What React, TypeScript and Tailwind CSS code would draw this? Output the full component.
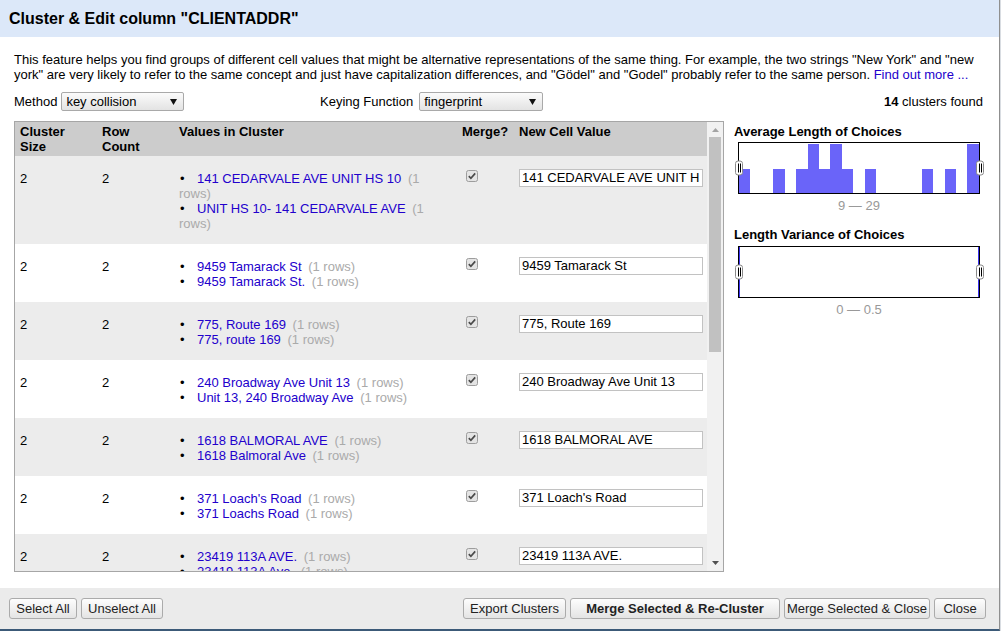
import React from "react";

type Cluster = {
  values: [string, number][];
  merged: string;
};

const clusters: Cluster[] = [
  { values: [["141 CEDARVALE AVE UNIT HS 10", 1], ["UNIT HS 10- 141 CEDARVALE AVE", 1]], merged: "141 CEDARVALE AVE UNIT HS 10" },
  { values: [["9459 Tamarack St", 1], ["9459 Tamarack St.", 1]], merged: "9459 Tamarack St" },
  { values: [["775, Route 169", 1], ["775, route 169", 1]], merged: "775, Route 169" },
  { values: [["240 Broadway Ave Unit 13", 1], ["Unit 13, 240 Broadway Ave", 1]], merged: "240 Broadway Ave Unit 13" },
  { values: [["1618 BALMORAL AVE", 1], ["1618 Balmoral Ave", 1]], merged: "1618 BALMORAL AVE" },
  { values: [["371 Loach's Road", 1], ["371 Loachs Road", 1]], merged: "371 Loach's Road" },
  { values: [["23419 113A AVE.", 1], ["23419 113A Ave.", 1]], merged: "23419 113A AVE." },
];

// average length histogram, 9..29
const bins = [1, 0, 0, 1, 0, 1, 2, 1, 2, 1, 0, 1, 0, 0, 0, 0, 1, 0, 1, 0, 2];

function Handle({ side }: { side: "left" | "right" }) {
  return (
    <div
      className={`absolute top-1/2 -translate-y-1/2 ${side === "left" ? "-left-[4px]" : "-right-[5px]"} h-[15px] w-[8px] rounded-[3px] border border-[#8a8a8a] bg-white flex items-center justify-center gap-[1px]`}
    >
      <div className="h-[9px] w-px bg-black" />
      <div className="h-[9px] w-px bg-black" />
    </div>
  );
}

function Checkbox() {
  return (
    <svg width="12" height="12" viewBox="0 0 12 12">
      <rect x="0.5" y="0.5" width="11" height="11" rx="2" fill="#e4e4e4" stroke="#9d9d9d" />
      <path d="M2.8 6.1 L4.9 8.3 L9.2 3.4" fill="none" stroke="#4a4a4a" strokeWidth="1.7" />
    </svg>
  );
}

function Select({ label, width }: { label: string; width: string }) {
  return (
    <div
      className={`${width} h-[19px] border border-[#a9a9a9] rounded-[2px] bg-linear-to-b from-[#fbfbfb] to-[#e3e3e3] flex items-center pl-[4px] pr-[6px]`}
    >
      <span className="flex-1">{label}</span>
      <svg width="7" height="6" viewBox="0 0 7 6">
        <polygon points="0,0 7,0 3.5,6" fill="#111" />
      </svg>
    </div>
  );
}

function Button({ children, width, bold }: { children: React.ReactNode; width: string; bold?: boolean }) {
  return (
    <button
      className={`${width} h-[21px] shrink-0 rounded-[3px] border border-[#ababab] bg-linear-to-b from-[#fdfdfd] to-[#e4e4e4] text-[13px] text-[#222] leading-[19px] whitespace-nowrap ${bold ? "font-bold" : ""}`}
    >
      {children}
    </button>
  );
}

function Row({ c, shaded }: { c: Cluster; shaded: boolean }) {
  return (
    <div className={`flex pt-[15px] pb-[13px] ${shaded ? "bg-[#ececec]" : "bg-white"}`}>
      <div className="w-[82px] shrink-0 pl-[5px]">{c.values.length}</div>
      <div className="w-[77px] shrink-0 pl-[5px]">{c.values.reduce((s, v) => s + v[1], 0)}</div>
      <div className="w-[283px] shrink-0 px-[5px]">
        {c.values.map(([v, n]) => (
          <div key={v}>
            <span className="inline-block w-[18px] pl-[1px]">•</span>
            <span className="text-[#2200cc]">{v}</span>{" "}
            <span className="ml-[3px] text-[#aaaaaa]">({n} rows)</span>
          </div>
        ))}
      </div>
      <div className="w-[57px] shrink-0 pl-[9px] -mt-[1px]">
        <Checkbox />
      </div>
      <div className="w-[193px] shrink-0 pl-[5px] -mt-[2px]">
        <div className="w-[184px] h-[18px] border border-[#c2c2c2] bg-white px-[2px] leading-[16px]">
          <div className="overflow-hidden whitespace-nowrap">{c.merged}</div>
        </div>
      </div>
    </div>
  );
}

export default function App() {
  return (
    <div className="w-[1001px] h-[631px] flex bg-[#e4e7eb] font-['Liberation_Sans',Arial,sans-serif] text-[13px] leading-[15px] text-black overflow-hidden">
      <div className="w-[1000px] h-full flex flex-col border-r border-r-[#8f8f8f] border-b-2 border-b-[#3c5a78]">
        <div className="h-[37px] shrink-0 bg-[#dce8f9] flex items-center pl-[9px]">
          <h1 className="text-[16px] font-bold">Cluster &amp; Edit column "CLIENTADDR"</h1>
        </div>

        <div className="flex-1 bg-white pl-[14px] pr-[15px]">
          <p className="mt-[15px]">
            This feature helps you find groups of different cell values that might be alternative representations of the
            same thing. For example, the two strings "New York" and "new york" are very likely to refer to the same concept
            and just have capitalization differences, and "Gödel" and "Godel" probably refer to the same person.{" "}
            <span className="text-[#2200cc]">Find out more ...</span>
          </p>

          <div className="mt-[10px] h-[19px] flex items-center">
            <div className="w-[306px] flex items-center gap-[4px]">
              <span>Method</span>
              <Select label="key collision" width="w-[123px]" />
            </div>
            <div className="flex items-center gap-[6px]">
              <span>Keying Function</span>
              <Select label="fingerprint" width="w-[124px]" />
            </div>
            <div className="ml-auto pr-[1px]">
              <b>14</b> clusters found
            </div>
          </div>

          <div className="mt-[10px] flex">
            <div className="w-[710px] h-[451px] shrink-0 border border-[#a6a6a6] flex overflow-hidden">
              <div className="w-[692px] shrink-0 overflow-hidden">
                <div className="flex bg-[#cccccc] font-bold pt-[2px] pb-[2px]">
                  <div className="w-[82px] shrink-0 pl-[5px]">
                    Cluster
                    <br />
                    Size
                  </div>
                  <div className="w-[77px] shrink-0 pl-[5px]">
                    Row
                    <br />
                    Count
                  </div>
                  <div className="w-[283px] shrink-0 pl-[5px]">Values in Cluster</div>
                  <div className="w-[57px] shrink-0 pl-[5px]">Merge?</div>
                  <div className="w-[193px] shrink-0 pl-[5px]">New Cell Value</div>
                </div>
                {clusters.map((c, i) => (
                  <Row key={i} c={c} shaded={i % 2 === 0} />
                ))}
              </div>
              <div className="w-[16px] shrink-0 bg-[#f1f1f1] flex flex-col items-center">
                <div className="h-[15px] flex items-center justify-center">
                  <svg width="7" height="4" viewBox="0 0 7 4">
                    <polygon points="0,4 7,4 3.5,0" fill="#a3a3a3" />
                  </svg>
                </div>
                <div className="w-[12px] h-[215px] bg-[#c1c1c1]" />
                <div className="flex-1" />
                <div className="h-[16px] flex items-center justify-center">
                  <svg width="7" height="4" viewBox="0 0 7 4">
                    <polygon points="0,0 7,0 3.5,4" fill="#505050" />
                  </svg>
                </div>
              </div>
            </div>

            <div className="ml-[10px] flex-1 pt-[3px]">
              <div className="font-bold">Average Length of Choices</div>
              <div className="ml-[4px] mt-[3px] w-[242px] h-[52px] border border-black relative">
                <div className="flex items-end h-full">
                  {bins.map((b, i) => (
                    <div key={i} className="flex-1 bg-[#6a64f9]" style={{ height: `${b * 24.5}px` }} />
                  ))}
                </div>
                <Handle side="left" />
                <Handle side="right" />
              </div>
              <div className="w-[250px] mt-[4px] text-center text-[#999999]">9 — 29</div>

              <div className="font-bold mt-[14px]">Length Variance of Choices</div>
              <div className="ml-[4px] mt-[4px] w-[242px] h-[52px] border border-black relative flex justify-between">
                <div className="w-px h-full bg-[#3b33f0]" />
                <div className="w-px h-full bg-[#3b33f0]" />
                <Handle side="left" />
                <Handle side="right" />
              </div>
              <div className="w-[250px] mt-[4px] text-center text-[#999999]">0 — 0.5</div>
            </div>
          </div>
        </div>

        <div className="h-[41px] shrink-0 bg-[#ebebeb] flex items-center pl-[9px] pr-[13px] gap-[4px]">
          <Button width="w-[68px]">Select All</Button>
          <Button width="w-[82px]">Unselect All</Button>
          <div className="flex-1" />
          <Button width="w-[103px]">Export Clusters</Button>
          <Button width="w-[210px]" bold>
            Merge Selected &amp; Re-Cluster
          </Button>
          <Button width="w-[146px]">Merge Selected &amp; Close</Button>
          <Button width="w-[52px]">Close</Button>
        </div>
      </div>
      <div className="flex-1 bg-[#d9dde2]" />
    </div>
  );
}
